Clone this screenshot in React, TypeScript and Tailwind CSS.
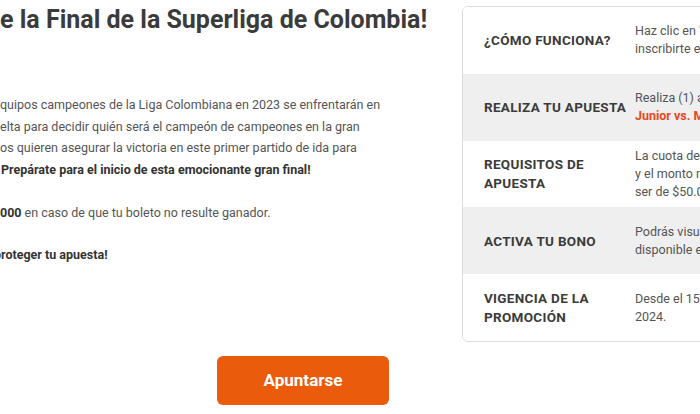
const rows = [
  {
    label: "¿Cómo funciona?",
    lines: [<>Haz clic en “Apuntarse” para</>, <>inscribirte en la promoción.</>],
    shade: false,
  },
  {
    label: "Realiza tu apuesta",
    lines: [
      <>Realiza (1) apuesta al partido</>,
      <span className="font-bold text-[#e8471c]">Junior vs. Millonarios</span>,
    ],
    shade: true,
  },
  {
    label: "Requisitos de apuesta",
    lines: [
      <>La cuota debe ser mínimo de 1.50</>,
      <>y el monto mínimo de apuesta debe</>,
      <>ser de $50.000</>,
    ],
    shade: false,
  },
  {
    label: "Activa tu bono",
    lines: [<>Podrás visualizar tu bono</>, <>disponible en tu cuenta.</>],
    shade: true,
  },
  {
    label: "Vigencia de la promoción",
    lines: [<>Desde el 15 de enero hasta el 31 de enero de</>, <>2024.</>],
    shade: false,
  },
];

export default function App() {
  return (
    <div
      className="flex w-[700px] h-[414px] overflow-hidden bg-white text-[12.5px] text-[#555]"
      style={{ fontFamily: "Roboto, 'Liberation Sans', sans-serif" }}
    >
      {/* left column, cut off on the left edge */}
      <div className="w-[440px] shrink-0 flex flex-col">
        <h1 className="mt-[5px] text-[25px] leading-[30px] font-bold text-[#3b3b3b] whitespace-nowrap">
          e la Final de la Superliga de Colombia!
        </h1>

        <div className="mt-[59px] leading-[21.5px] whitespace-nowrap">
          <div>quipos campeones de la Liga Colombiana en 2023 se enfrentarán en</div>
          <div>elta para decidir quién será el campeón de campeones en la gran</div>
          <div>os quieren asegurar la victoria en este primer partido de ida para</div>
          <div className="font-bold text-[#333] ml-[1px]">Prepárate para el inicio de esta emocionante gran final!</div>
        </div>

        <p className="mt-[22px] leading-[21.5px] whitespace-nowrap">
          <span className="font-bold text-[#333]">000</span> en caso de que tu boleto no resulte ganador.
        </p>

        <p className="mt-[20px] leading-[21.5px] whitespace-nowrap font-bold text-[#333] -ml-[6px]">
          proteger tu apuesta!
        </p>

        <div className="mt-auto mb-[9px] flex justify-center pl-[166px]">
          <button className="w-[172px] h-[49px] rounded-md bg-[#ea5b0c] text-white text-[17px] font-bold">
            Apuntarse
          </button>
        </div>
      </div>

      {/* info card */}
      <div className="ml-[22px] mt-[6px] self-start w-[420px] shrink-0 rounded-md border border-[#dcdcdc] overflow-hidden">
        {rows.map((r) => (
          <div
            key={r.label}
            className={`flex items-center h-[66.8px] pl-[21px] ${r.shade ? "bg-[#efefef]" : "bg-white"}`}
          >
            <div className="w-[151px] shrink-0 text-[13.5px] leading-[18.5px] font-bold uppercase tracking-[0.3px] text-[#3b3b3b]">
              {r.label}
            </div>
            <div className="leading-[18px] whitespace-nowrap">
              {r.lines.map((l, i) => (
                <div key={i}>{l}</div>
              ))}
            </div>
          </div>
        ))}
      </div>
    </div>
  );
}
